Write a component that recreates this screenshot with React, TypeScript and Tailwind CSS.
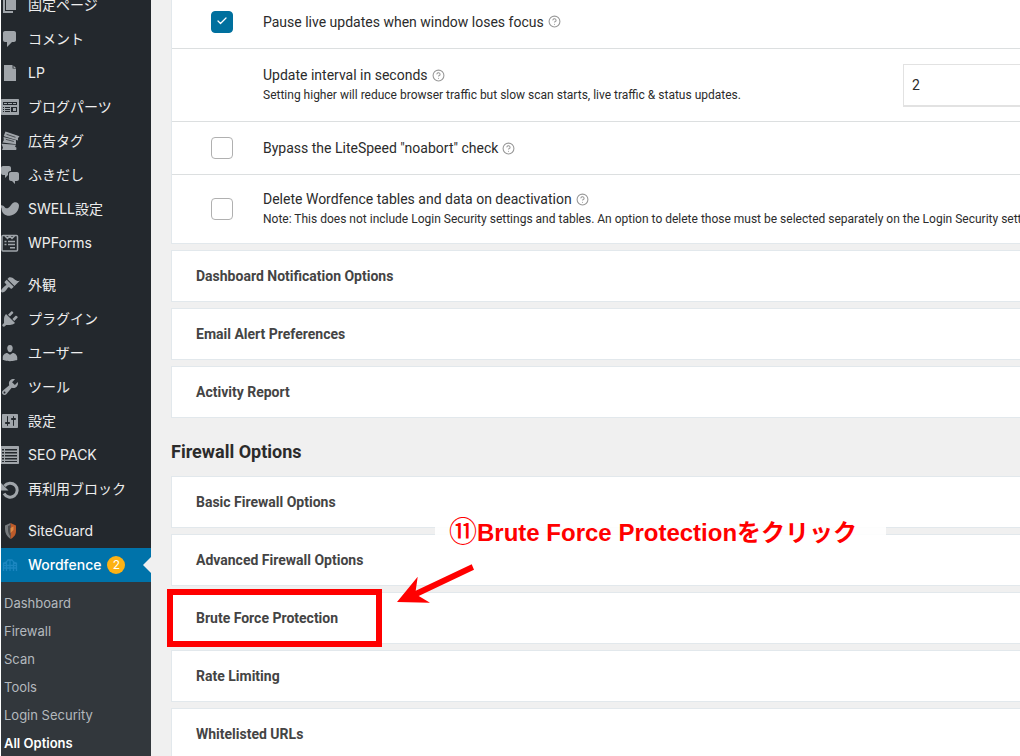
import React, { useState } from "react";
import { Check, CircleHelp } from "lucide-react";

type IconName =
  | "page" | "comment" | "document" | "parts" | "tickets" | "chat" | "swell" | "forms"
  | "brush" | "plug" | "user" | "wrench" | "sliders" | "list" | "reload" | "shield" | "fence";

const paths: Partial<Record<IconName, string>> = {
  page: "M6 15V2h10v13H6zm-1 1h8v2H3V5h2v11z",
  comment: "M5 2h9c1.1 0 2 .9 2 2v7c0 1.1-.9 2-2 2h-2l-5 5v-5H5c-1.1 0-2-.9-2-2V4c0-1.1.9-2 2-2z",
  document: "M4 2h8l.6.3v3.200h3.200L16 6v12H4V2zm9.500.5L16 5h-2.500V2.500z",
  chat: "M11 6h-.82C9.07 6 8 7.2 8 8.16V10l-3 3v-3H3c-1.1 0-2-.9-2-2V3c0-1.1.9-2 2-2h6c1.1 0 2 .9 2 2v3zm0 1h6c1.1 0 2 .9 2 2v5c0 1.1-.9 2-2 2h-2v3l-3-3h-1c-1.1 0-2-.9-2-2V9c0-1.1.9-2 2-2z",
  swell: "M0 6.500c2-.8 3.600 0 4.500 1.500.9 1.400 2.300 1.800 4 .8C10.700 7.500 11.300 4.600 13.800 3.500c2.500-1 5.200.2 5.200 3.100 0 4.500-3.600 9.900-9.300 10.200-4.600.2-7.700-2.600-8-6.300C1.600 9 1.200 8 0 7.800z",
  brush: "M14.48 11.06L7.41 3.99l1.5-1.5c.5-.56 2.3-.47 3.51.32 1.21.8 1.43 1.28 2.91 2.1 1.18.64 2.45 1.26 4.45.85zm-.71.71L6.7 4.7 4.93 6.47c-.39.39-.39 1.02 0 1.41l1.06 1.06c.39.39.39 1.03 0 1.42-.6.6-1.43 1.11-2.21 1.69-.35.26-.7.53-1.01.84C1.43 14.23.4 16.08 1.4 17.07c.99 1 2.84-.03 4.18-1.36.31-.31.58-.66.85-1.02.57-.78 1.08-1.61 1.69-2.21.39-.39 1.02-.39 1.41 0l1.06 1.06c.39.39 1.02.39 1.41 0z",
  plug: "M13.11 4.36L9.87 7.6 8 5.73l3.24-3.24c.35-.34 1.05-.2 1.56.32.52.51.66 1.21.31 1.55zm-8 1.77l.91-1.12 9.01 9.01-1.19.84c-.71.71-2.63 1.16-3.82 1.16H6.14L4.9 17.26c-.59.59-1.54.59-2.12 0-.59-.58-.59-1.53 0-2.12l1.24-1.24v-3.88c0-1.13.4-3.19 1.09-3.89zm7.26 3.97l3.24-3.24c.34-.35 1.04-.21 1.55.31.52.51.66 1.21.31 1.55l-3.24 3.25z",
  user: "M10 9.25c-2.27 0-2.73-3.44-2.73-3.44C7 4.02 7.82 2 9.97 2c2.16 0 2.98 2.02 2.71 3.81 0 0-.41 3.44-2.68 3.44zm0 2.57L12.72 10c2.39 0 4.52 2.33 4.52 4.53v2.49s-3.65 1.13-7.24 1.13c-3.65 0-7.24-1.13-7.24-1.13v-2.49c0-2.25 1.94-4.48 4.47-4.48z",
  wrench: "M16.68 9.77c-1.34 1.34-3.3 1.67-4.95.99l-5.41 6.52c-.99.99-2.59.99-3.58 0s-.99-2.59 0-3.57l6.52-5.42c-.68-1.65-.35-3.61.99-4.95 1.28-1.28 3.12-1.62 4.72-1.06l-2.89 2.89 2.82 2.82 2.86-2.87c.53 1.58.18 3.39-1.08 4.65zM3.81 16.21c.4.39 1.04.39 1.43 0 .4-.4.4-1.04 0-1.43-.39-.4-1.03-.4-1.43 0-.39.39-.39 1.03 0 1.43z",
  sliders: "M18 16V4c0-.55-.45-1-1-1H3c-.55 0-1 .45-1 1v12c0 .55.45 1 1 1h14c.55 0 1-.45 1-1zM8 11h1c.55 0 1 .45 1 1s-.45 1-1 1H8v1.5c0 .28-.22.5-.5.5s-.5-.22-.5-.5V13H6c-.55 0-1-.45-1-1s.45-1 1-1h1V5.500c0-.28.22-.5.5-.5s.5.22.5.5V11zm5-2h-1c-.55 0-1-.45-1-1s.45-1 1-1h1V5.500c0-.28.22-.5.5-.5s.5.22.5.5V7h1c.55 0 1 .45 1 1s-.45 1-1 1h-1v5.500c0 .28-.22.5-.5.5s-.5-.22-.5-.5V9z",
  parts: "M2 2h16c.6 0 1 .4 1 1v14c0 .6-.4 1-1 1H2c-.6 0-1-.4-1-1V3c0-.6.4-1 1-1zm1 3v3h14V5H3zm1 1h3v1H4V6zm4 0h4v1H8V6zm5 0h3v1h-3V6zM3 10v1h1v-1H3zm2 0v1h5v-1H5zm-2 2v1h1v-1H3zm2 0v1h5v-1H5zm-2 2v1h1v-1H3zm2 0v1h5v-1H5zm6-4v5h6v-5h-6zm2 1h3v3h-3v-3z",
  list: "M1 1h17c.6 0 1 .4 1 1v16c0 .6-.4 1-1 1H1V1zm1 3v1.500h2V4H2zm3 0v1.500h12V4H5zM2 7v1.500h2V7H2zm3 0v1.500h12V7H5zm-3 3v1.500h2V10H2zm3 0v1.500h12V10H5zm-3 3v1.500h2V13H2zm3 0v1.500h12V13H5zm-3 3v1h2v-1H2zm3 0v1h12v-1H5z",
};

const MenuIcon: React.FC<{ name: IconName }> = ({ name }) => (
  <svg className="-ml-px size-5 shrink-0 text-[#a0a5aa]" viewBox="0 0 20 20" fill="currentColor" aria-hidden="true">
    {paths[name] && <path fillRule="evenodd" d={paths[name]} />}
    {name === "tickets" && (
      <>
        <path d="M5.500.5l14 4.800-1.600 2 .2 2.200L4.800 5.400 3.700 5z" />
        <path d="M3.500 6L16 9.200v4L2.500 11.500l1.300-2.200z" />
        <path d="M1.500 12.700l14.500 1-1 1.800 1.500 1.200-.3 2.300H2l1-2.200z" />
        <path d="M6.500 3.300l9 3M5.800 8.300l8 2.200" stroke="#23282d" strokeWidth=".7" />
      </>
    )}
    {name === "forms" && (
      <g fill="none" stroke="currentColor" strokeWidth="1.5">
        <rect x="2" y="2.500" width="15.500" height="15.500" rx="1" />
        <path d="M5 3l2.500 2.500L9.700 3 12 5.500 14.500 3M4.500 8.500h2m1.500 0h7M4.500 11.500h2m1.500 0h7M10 14.700h5" />
      </g>
    )}
    {name === "reload" && (
      <>
        <path d="M4.500 7a7 7 0 1 1-.5 7.500" fill="none" stroke="currentColor" strokeWidth="3" />
        <path d="M1 4v7.500h7.500z" />
      </>
    )}
    {name === "shield" && (
      <>
        <path d="M5 4.500L10.500 2v16C7 15.500 5 12.500 5 8z" fill="#777b7e" />
        <path d="M10.500 2L16 4.500V10c0 4-2.500 6.500-5.500 8z" fill="#bd5b2a" />
        <path d="M8 5l2.500-1v11.500C8.800 13.500 8 11.500 8 9z" fill="#4a4d50" />
        <path d="M10.500 7l3-1.500V9l-3 3z" fill="#e08b45" />
      </>
    )}
    {name === "fence" && (
      <g fill="none" stroke="#1b86c0" strokeWidth="1.3">
        <path d="M3.500 16V7.500M6.500 16V6M10 16V4.500M13.500 16V6M16.500 16V7.500M3 8.500c2-.5 4-1.500 5-3.500h4c1 2 3 3 5 3.500M3 13h14M3 10.500h14" />
      </g>
    )}
  </svg>
);

const menuGroups: { icon: IconName; label: string }[][] = [
  [
    { icon: "page", label: "固定ページ" },
    { icon: "comment", label: "コメント" },
    { icon: "document", label: "LP" },
    { icon: "parts", label: "ブログパーツ" },
    { icon: "tickets", label: "広告タグ" },
    { icon: "chat", label: "ふきだし" },
    { icon: "swell", label: "SWELL設定" },
    { icon: "forms", label: "WPForms" },
  ],
  [
    { icon: "brush", label: "外観" },
    { icon: "plug", label: "プラグイン" },
    { icon: "user", label: "ユーザー" },
    { icon: "wrench", label: "ツール" },
    { icon: "sliders", label: "設定" },
    { icon: "list", label: "SEO PACK" },
    { icon: "reload", label: "再利用ブロック" },
  ],
  [{ icon: "shield", label: "SiteGuard" }],
];

const submenu = ["Dashboard", "Firewall", "Scan", "Tools", "Login Security", "All Options"];

const Sidebar: React.FC = () => (
  <aside className="w-[151px] shrink-0 overflow-hidden border-l border-white bg-[#23282d] font-['Inter','Noto_Sans_CJK_JP',sans-serif] text-sm text-[#eee]">
    <nav className="-mt-3 flex min-h-full flex-col">
      <div className="flex flex-col gap-2">
        {menuGroups.map((group, i) => (
          <ul key={i}>
            {group.map((item) => (
              <li key={item.label}>
                <a href="#" className="flex h-[34px] items-center gap-2 whitespace-nowrap">
                  <MenuIcon name={item.icon} />
                  {item.label}
                </a>
              </li>
            ))}
          </ul>
        ))}
      </div>
      <a href="#" className="relative flex h-[34px] items-center gap-2 bg-[#0073aa] font-medium text-white">
        <MenuIcon name="fence" />
        Wordfence
        <span className="-ml-0.5 flex size-[18px] items-center justify-center rounded-full bg-[#fcb214] text-xs font-normal">2</span>
        <span className="absolute top-1/2 right-0 -translate-y-1/2 border-8 border-l-0 border-transparent border-r-[#f0f0f0]" />
      </a>
      <ul className="grow bg-[#32373c] px-[3px] py-[7px] text-[13px] text-[#b4b9be]">
        {submenu.map((label) => (
          <li key={label}>
            <a href="#" className={`flex h-7 items-center ${label === "All Options" ? "font-semibold text-white" : ""}`}>
              {label}
            </a>
          </li>
        ))}
      </ul>
    </nav>
  </aside>
);

const Help: React.FC = () => (
  <a href="#" aria-label="Help" className="text-[#999]">
    <CircleHelp size={13} strokeWidth={2} />
  </a>
);

interface OptionTextProps {
  id: string;
  title: string;
  note?: string;
}

const OptionText: React.FC<OptionTextProps> = ({ id, title, note }) => (
  <div className="min-w-0 grow whitespace-nowrap">
    <div className="flex h-5 items-center gap-1 text-sm">
      <label htmlFor={id}>{title}</label>
      <Help />
    </div>
    {note && <p className="text-xs leading-5">{note}</p>}
  </div>
);

const OptionCheckbox: React.FC<{ id: string; initial?: boolean }> = ({ id, initial = false }) => {
  const [checked, setChecked] = useState(initial);

  return (
    <span className="relative size-[22px] shrink-0">
      <input
        id={id}
        type="checkbox"
        checked={checked}
        onChange={(e) => setChecked(e.target.checked)}
        className="block size-full appearance-none rounded border border-[#b0b0b0] bg-white checked:border-[#00709e] checked:bg-[#00709e]"
      />
      {checked && <Check size={12} strokeWidth={2.5} className="pointer-events-none absolute top-1 left-[5px] text-white" />}
    </span>
  );
};

const Section: React.FC<{ title: string; children?: React.ReactNode }> = ({ title, children }) => (
  <div className="relative">
    <button type="button" className="flex h-[52px] w-full items-center border border-r-0 border-[#e2e8ec] bg-white px-6 text-left text-sm font-bold text-[#444]">
      {title}
    </button>
    {children}
  </div>
);

// Red frame, arrow and caption pointing at a section
const Callout: React.FC = () => (
  <div className="pointer-events-none">
    <div className="absolute -top-[3px] -left-1 z-10 h-[58px] w-[215px] border-6 border-[#f00]" />
    <svg className="absolute -top-7 left-[226px] z-10" width="78" height="40" viewBox="0 0 78 40" fill="#f00">
      <path d="M0 38L20.700 12.700 18.700 26.700 74.700.3 77 5.700 21.700 32 33 38.700z" />
    </svg>
    <p className="absolute -top-20 left-[264px] z-10 flex h-[42px] w-[451px] items-center bg-white/90 pl-3.5 font-['Liberation_Sans','Noto_Sans_CJK_JP',sans-serif] text-2xl font-bold whitespace-nowrap text-[#f00]">
      <span className="text-[28px] font-medium">⑪</span>Brute Force Protectionをクリック
    </p>
  </div>
);

export default function App() {
  const [interval, setInterval] = useState("2");

  return (
    <div className="flex h-screen overflow-hidden bg-[#f0f0f0] font-[Roboto,sans-serif] text-[#2b2b2b]">
      <Sidebar />
      <main className="min-w-0 grow overflow-hidden pl-5">
        <div className="-mt-[5px] flex flex-col gap-1.5">
          <div className="border-b border-l border-[#e2e8ec] bg-white">
            <div className="flex h-[54px] items-center gap-[30px] border-b border-[#dcdfe0] pl-[39px]">
              <OptionCheckbox id="pause-updates" initial />
              <OptionText id="pause-updates" title="Pause live updates when window loses focus" />
            </div>
            <div className="flex h-[73px] items-center border-b border-[#dcdfe0] pl-[91px]">
              <OptionText
                id="update-interval"
                title="Update interval in seconds"
                note="Setting higher will reduce browser traffic but slow scan starts, live traffic & status updates."
              />
              <input
                id="update-interval"
                type="text"
                value={interval}
                onChange={(e) => setInterval(e.target.value)}
                className="h-[43px] w-[117px] shrink-0 border border-r-0 border-b-2 border-[#e2e2e2] bg-white px-2 text-sm"
              />
            </div>
            <div className="flex h-[53px] items-center gap-[30px] border-b border-[#dcdfe0] pl-[39px]">
              <OptionCheckbox id="bypass-noabort" />
              <OptionText id="bypass-noabort" title={'Bypass the LiteSpeed "noabort" check'} />
            </div>
            <div className="flex h-[68px] items-center gap-[30px] pl-[39px]">
              <OptionCheckbox id="delete-tables" />
              <OptionText
                id="delete-tables"
                title="Delete Wordfence tables and data on deactivation"
                note="Note: This does not include Login Security settings and tables. An option to delete those must be selected separately on the Login Security settings page."
              />
            </div>
          </div>
          <Section title="Dashboard Notification Options" />
          <Section title="Email Alert Preferences" />
          <Section title="Activity Report" />
        </div>

        <h2 className="mt-5 mb-[10px] text-lg leading-7 font-bold">Firewall Options</h2>

        <div className="flex flex-col gap-1.5">
          <Section title="Basic Firewall Options" />
          <Section title="Advanced Firewall Options" />
          <Section title="Brute Force Protection">
            <Callout />
          </Section>
          <Section title="Rate Limiting" />
          <Section title="Whitelisted URLs" />
        </div>
      </main>
    </div>
  );
}
